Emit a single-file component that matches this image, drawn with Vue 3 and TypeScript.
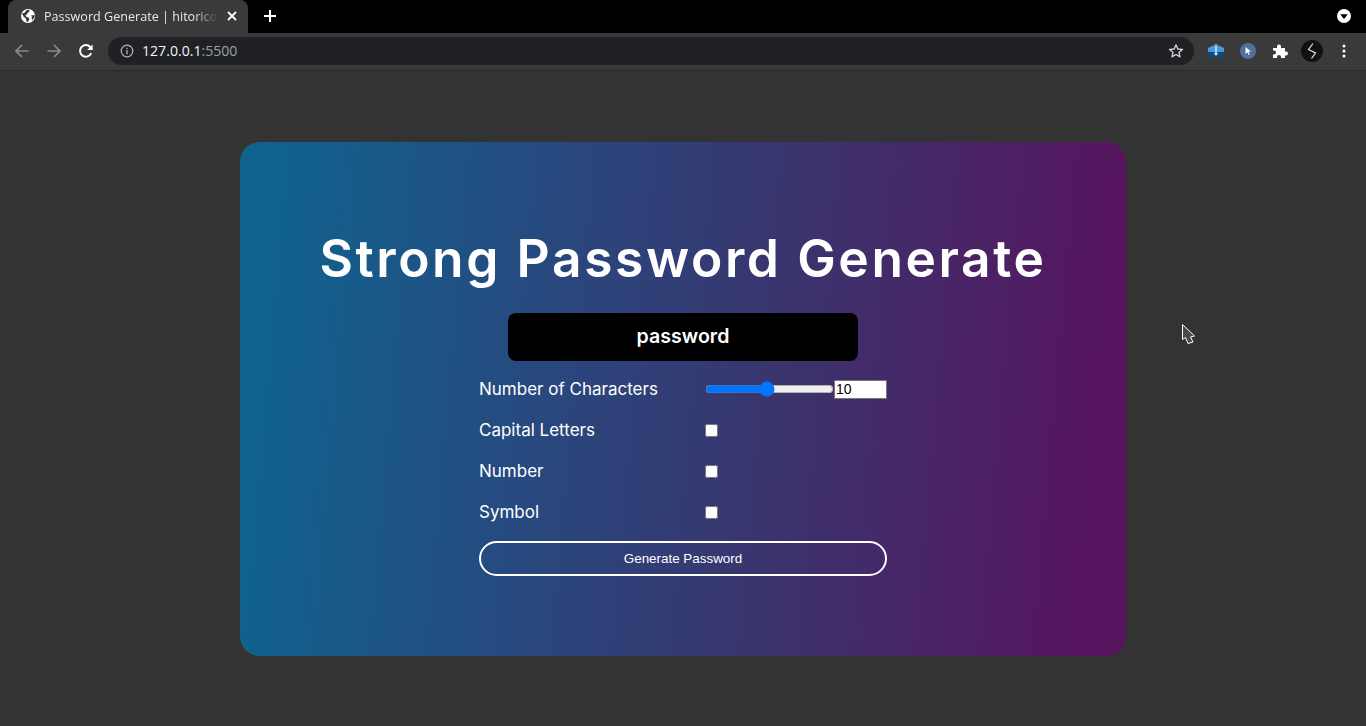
<script setup lang="ts">
import { ref } from 'vue'

const length = ref(10)
const options = ['Capital Letters', 'Number', 'Symbol']
</script>

<template>
  <div class="page">
    <!-- browser chrome -->
    <div class="tabbar">
      <div class="tab">
        <svg class="globe" width="16" height="16" viewBox="0 0 16 16">
          <circle cx="8" cy="8" r="7" fill="#fff" />
          <path d="M2 5.5 5 4.5 6 2.5 9 1.8 9.5 3.5 7.5 5 7 6.5 5.5 7 6.5 9 8.5 9.5 9.5 11 8 14 6.5 13.5 5.8 10.5 3.5 8.5Z" fill="#3a3a3a" />
          <path d="M11 7.5 14.5 7 14.5 9 12.5 12 11.5 11 12 9Z" fill="#3a3a3a" />
        </svg>
        <span class="tab-title">Password Generate | hitorico</span>
        <svg class="close" width="10" height="10" viewBox="0 0 10 10">
          <path d="M1 1 9 9M9 1 1 9" stroke="#fff" stroke-width="1.8" />
        </svg>
      </div>
      <svg class="newtab" width="14" height="14" viewBox="0 0 14 14">
        <path d="M7 1V13M1 7H13" stroke="#fff" stroke-width="2" />
      </svg>
      <svg class="profile-dot" width="14" height="14" viewBox="0 0 14 14">
        <circle cx="7" cy="7" r="7" fill="#fff" />
        <path d="M3.2 5.2H10.8L7 10Z" fill="#000" />
      </svg>
    </div>

    <div class="toolbar">
      <svg class="nav first" width="16" height="16" viewBox="0 0 16 16" fill="none" stroke="#8a8b8d" stroke-width="1.7">
        <path d="M14.5 8H2M8 2 2 8 8 14" />
      </svg>
      <svg class="nav" width="16" height="16" viewBox="0 0 16 16" fill="none" stroke="#8a8b8d" stroke-width="1.7">
        <path d="M1.5 8H14M8 2 14 8 8 14" />
      </svg>
      <svg class="nav" width="16" height="16" viewBox="0 0 16 16" fill="none" stroke="#fff" stroke-width="2">
        <path d="M13.2 10.2A5.8 5.8 0 1 1 12.2 4L14 6" />
        <path d="M14.6 1.6V7H9.2Z" fill="#fff" stroke="none" />
      </svg>
      <div class="omnibox">
        <svg width="14" height="14" viewBox="0 0 14 14" fill="none">
          <circle cx="7" cy="7" r="5.8" stroke="#b5b6b8" stroke-width="1.2" />
          <path d="M7 6V10.2M7 3.8V5" stroke="#b5b6b8" stroke-width="1.3" />
        </svg>
        <span class="url"><b>127.0.0.1</b>:5500</span>
        <svg class="star" width="16" height="16" viewBox="0 0 16 16" fill="none">
          <path d="M8 1.8 9.8 6 14.4 6.4 10.9 9.4 12 13.9 8 11.5 4 13.9 5.1 9.4 1.6 6.4 6.2 6Z" stroke="#d5d6d8" stroke-width="1.3" stroke-linejoin="round" />
        </svg>
      </div>
      <div class="extensions">
        <span class="ext">
          <svg width="18" height="16" viewBox="0 0 18 16">
            <path d="M1 5 5 3H6L8 1H10L12 3H13L17 5V9H1Z" fill="#4a9ad8" />
            <path d="M1 9H17V13L13 15H5L1 13Z" fill="#14487e" />
            <path d="M8.3 3H9.7V10H11L9 13 7 10H8.3Z" fill="#d8ecfa" />
          </svg>
        </span>
        <span class="ext">
          <svg width="16" height="16" viewBox="0 0 16 16">
            <circle cx="8" cy="8" r="8" fill="#4f6f9c" />
            <path d="M5.5 4 11 8.5 8.5 8.8 9.8 11.5 8.7 12 7.5 9.3 5.5 11Z" fill="#fff" />
          </svg>
        </span>
        <span class="ext">
          <svg width="16" height="16" viewBox="0 0 16 16">
            <path d="M1 5H5V3.5A2 2 0 0 1 9 3.5V5H13V8.5H14A2 2 0 0 1 14 12.5H13V15H9V14A2 2 0 0 0 5 14V15H1V11.5H2A2 2 0 0 0 2 7.5H1Z" fill="#fff" />
          </svg>
        </span>
        <span class="ext">
          <svg width="22" height="22" viewBox="0 0 22 22" fill="none">
            <circle cx="11" cy="11" r="11" fill="#0e1214" />
            <path d="M12 3.5 7.5 9.5 14.5 13 10.5 18.5" stroke="#e8e8e8" stroke-width="1.2" />
          </svg>
        </span>
        <span class="ext">
          <svg width="4" height="14" viewBox="0 0 4 14">
            <circle cx="2" cy="2" r="1.5" fill="#fff" />
            <circle cx="2" cy="7" r="1.5" fill="#fff" />
            <circle cx="2" cy="12" r="1.5" fill="#fff" />
          </svg>
        </span>
      </div>
    </div>

    <!-- page content -->
    <main class="content">
      <section class="card">
        <h1>Strong Password Generate</h1>
        <div class="output">password</div>
        <div class="form">
          <div class="row">
            <label>Number of Characters</label>
            <input class="slider" type="range" min="1" max="20" v-model.number="length" />
            <input class="count" type="text" :value="length" />
          </div>
          <div class="row" v-for="opt in options" :key="opt">
            <label>{{ opt }}</label>
            <input class="check" type="checkbox" />
          </div>
          <button class="generate">Generate Password</button>
        </div>
      </section>
      <svg class="cursor" width="16" height="24" viewBox="0 0 16 24">
        <path d="M1.5 1.5V16.5L4.5 14.5 7 20.5 12 19 9.5 14 13.5 13Z" fill="#4a4a4a" stroke="#fff" stroke-width="1" />
      </svg>
    </main>
  </div>
</template>

<style>
html, body { margin: 0; background: #333; }
</style>

<style scoped>
.page {
  width: 1366px;
  height: 726px;
  overflow: hidden;
  display: flex;
  flex-direction: column;
  background: #333;
  font-family: "Open Sans", "Liberation Sans", sans-serif;
}
.tabbar {
  height: 33px;
  background: #000;
  display: flex;
  align-items: flex-end;
  padding-left: 8px;
}
.tab {
  width: 240px;
  height: 33px;
  box-sizing: border-box;
  background: #3a3a3a;
  border-radius: 8px 8px 0 0;
  display: flex;
  align-items: center;
  padding: 0 0 1px 12px;
  color: #e8e8e8;
  font-size: 12.6px;
}
.tab-title {
  width: 174px;
  margin-left: 8px;
  white-space: nowrap;
  -webkit-mask-image: linear-gradient(90deg, #000 150px, transparent 174px);
  mask-image: linear-gradient(90deg, #000 150px, transparent 174px);
}
.close { margin-left: 9px; }
.newtab { margin: 0 0 10px 15px; }
.profile-dot { margin: 0 15px 10px auto; }
.toolbar {
  height: 37px;
  background: #3a3a3a;
  border-bottom: 1px solid #2a2a2a;
  display: flex;
  align-items: center;
}
.nav { margin: 0 0 2px 16px; }
.nav.first { margin-left: 14px; }
.omnibox {
  width: 1086px;
  height: 28px;
  margin: 0 0 2px 14px;
  box-sizing: border-box;
  background: #202124;
  border-radius: 14px;
  display: flex;
  align-items: center;
  padding: 0 10px 0 12px;
  font-size: 14.1px;
  color: #9aa0a6;
}
.url { margin-left: 8px; }
.url b { font-weight: 400; color: #f1f3f4; }
.star { margin-left: auto; }
.extensions {
  flex: 1;
  display: flex;
  align-items: center;
  padding: 0 0 2px 6px;
}
.ext {
  width: 32px;
  flex: none;
  display: flex;
  justify-content: center;
}
.content {
  flex: 1;
  position: relative;
  display: flex;
  justify-content: center;
  padding-top: 71px;
}
.card {
  width: 886px;
  height: 514px;
  box-sizing: border-box;
  border-radius: 20px;
  background: linear-gradient(95deg, #0f638e 3%, #28487e 35%, #3a346e 60%, #56155e 95%);
  color: #fff;
  display: flex;
  flex-direction: column;
  align-items: center;
  padding-top: 83px;
  font-family: "Inter", "Open Sans", sans-serif;
}
h1 {
  margin: 0;
  font-size: 51.5px;
  line-height: 66px;
  font-weight: 600;
  letter-spacing: 2.6px;
}
.output {
  width: 350px;
  height: 48px;
  margin-top: 22px;
  background: #000;
  border-radius: 8px;
  display: flex;
  align-items: center;
  justify-content: center;
  font-size: 19.6px;
  font-weight: 600;
  padding-bottom: 2px;
  box-sizing: border-box;
}
.form {
  width: 408px;
  margin-top: 8px;
}
.row {
  height: 41px;
  display: flex;
  align-items: center;
  font-size: 17px;
}
.row label {
  width: 226px;
  flex: none;
  margin-bottom: 2px;
}
.slider {
  width: 129px;
  margin: 0 0 2px;
  flex: none;
}
.count {
  width: 53px;
  height: 19px;
  box-sizing: border-box;
  margin: 0 0 1px;
  padding: 0 1px;
  border: 1px solid #767676;
  background: #fff;
  color: #000;
  font: 14px "Liberation Sans", sans-serif;
  outline: none;
}
.check {
  width: 13px;
  height: 13px;
  margin: 0;
}
.generate {
  display: block;
  width: 100%;
  height: 35px;
  margin-top: 8px;
  border: 2px solid #fff;
  border-radius: 18px;
  background: transparent;
  color: #fff;
  font: 13.4px "Liberation Sans", sans-serif;
}
.cursor {
  position: absolute;
  left: 1181px;
  top: 252px;
}
</style>
